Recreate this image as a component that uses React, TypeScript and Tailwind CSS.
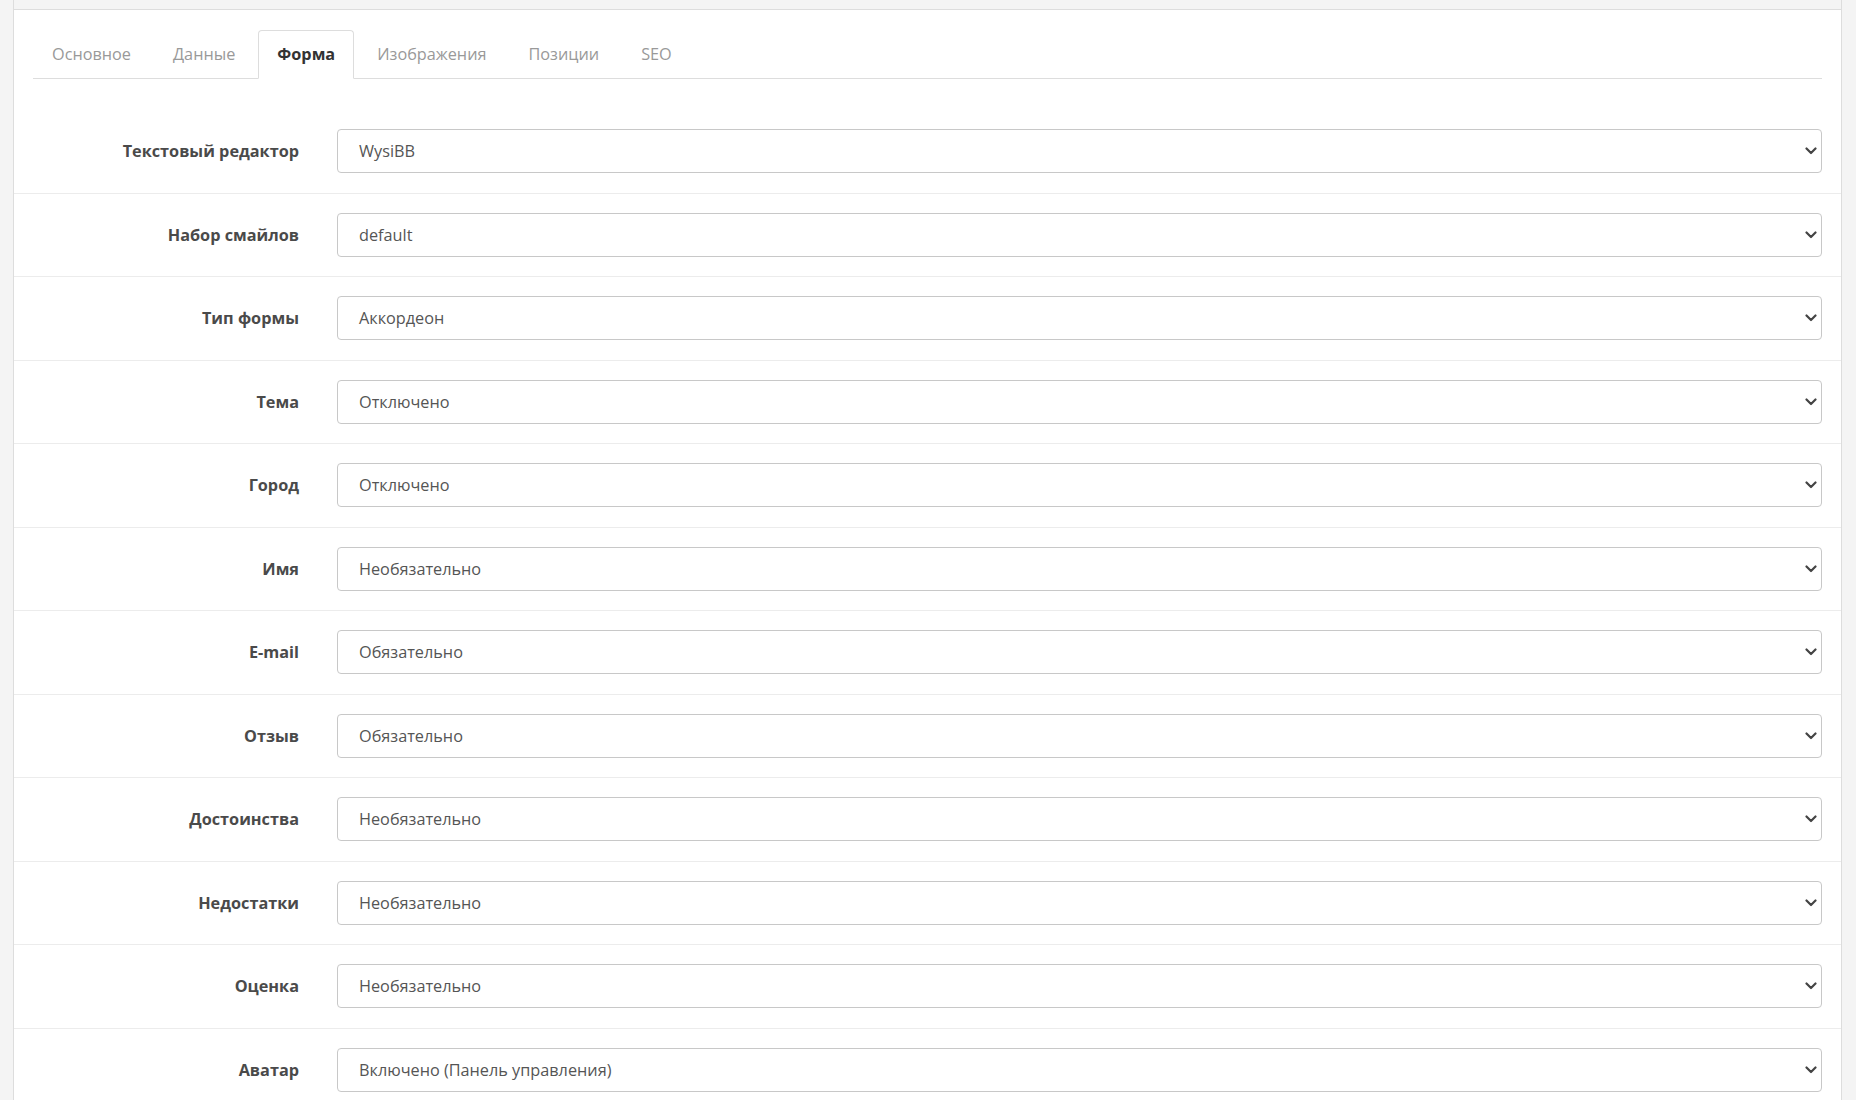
const tabs = ["Основное", "Данные", "Форма", "Изображения", "Позиции", "SEO"];

type Field = {
  label: string;
  value: string;
};

const fields: Field[] = [
  { label: "Текстовый редактор", value: "WysiBB" },
  { label: "Набор смайлов", value: "default" },
  { label: "Тип формы", value: "Аккордеон" },
  { label: "Тема", value: "Отключено" },
  { label: "Город", value: "Отключено" },
  { label: "Имя", value: "Необязательно" },
  { label: "E-mail", value: "Обязательно" },
  { label: "Отзыв", value: "Обязательно" },
  { label: "Достоинства", value: "Необязательно" },
  { label: "Недостатки", value: "Необязательно" },
  { label: "Оценка", value: "Необязательно" },
  { label: "Аватар", value: "Включено (Панель управления)" },
];

function Chevron() {
  return (
    <svg width="12" height="8" viewBox="0 0 12 8" fill="none" className="shrink-0">
      <path d="M1.5 1.5 6 6l4.5-4.5" stroke="#444" strokeWidth="2.2" strokeLinecap="round" strokeLinejoin="round" />
    </svg>
  );
}

function SelectBox({ value }: { value: string }) {
  return (
    <div className="flex h-[44px] flex-1 cursor-pointer items-center justify-between rounded-[4px] border border-[#c8c8c8] bg-white pl-[21px] pr-[4px] text-[16.25px] text-[#555]">
      <span>{value}</span>
      <Chevron />
    </div>
  );
}

export default function App() {
  const active = "Форма";

  return (
    <div
      className="min-h-screen bg-[#f4f4f4] pl-[13px] pr-[14px]"
      style={{ fontFamily: '"Open Sans", "Noto Sans", sans-serif' }}
    >
      <div className="border-x border-[#ddd] bg-white">
        <div className="h-[10px] border-b border-[#ddd] bg-[#f4f4f4]" />

        <div className="px-[19px] pt-5">
          <ul className="flex border-b border-[#ddd]">
            {tabs.map((tab) => (
              <li key={tab} className="-mb-px mr-1">
                <a
                  className={`block rounded-t-[4px] border px-[18px] pb-[12.5px] pt-[10.5px] text-[16.25px] leading-6 ${
                    tab === active
                      ? "border-[#ddd] border-b-white bg-white font-bold text-[#333]"
                      : "border-transparent text-[#999]"
                  }`}
                >
                  {tab}
                </a>
              </li>
            ))}
          </ul>
        </div>

        <div className="mt-[31px]">
          {fields.map((field) => (
            <div
              key={field.label}
              className="flex items-center border-b border-[#ececec] px-[19px] py-[19.25px]"
            >
              <label className="w-[266px] shrink-0 text-right text-[16.25px] font-bold text-[#4a4a4a]">
                {field.label}
              </label>
              <div className="ml-[38px] flex flex-1">
                <SelectBox value={field.value} />
              </div>
            </div>
          ))}
        </div>
      </div>
    </div>
  );
}
